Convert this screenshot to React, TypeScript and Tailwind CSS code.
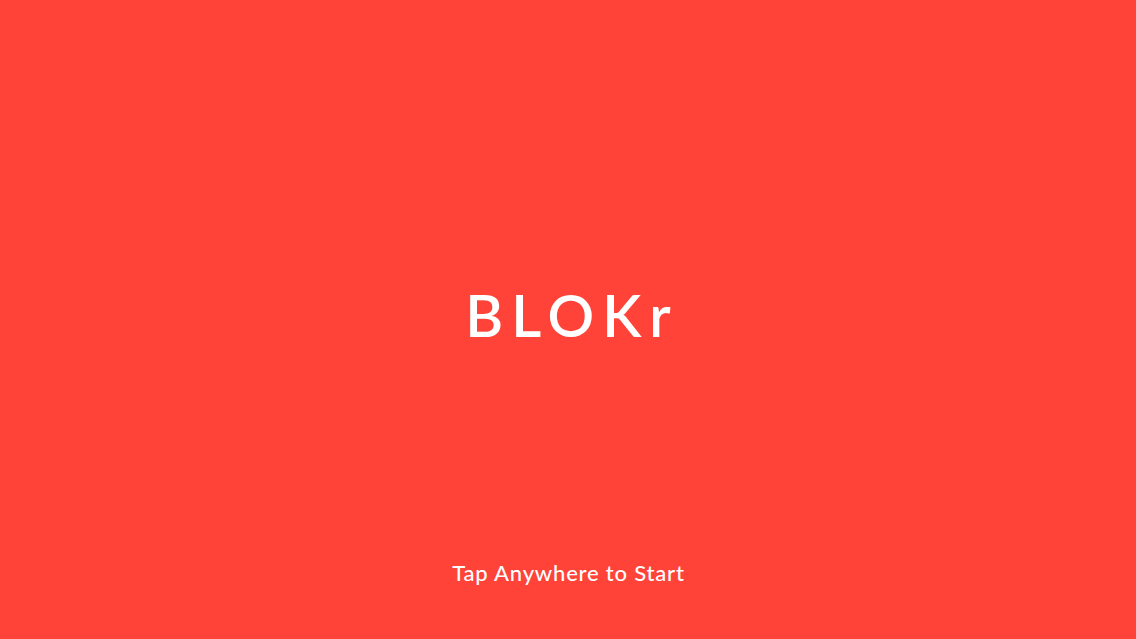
export default function App() {
  return (
    <div className="flex h-[639px] w-[1136px] flex-col items-center bg-[#ff4338] font-['Lato','Open_Sans',sans-serif] text-white">
      <div className="flex flex-1 items-center justify-center pt-[68px]">
        <h1 className="mr-[-8px] text-[58px] font-semibold leading-none tracking-[8px]">BLOKr</h1>
      </div>
      <p className="mr-[-0.8px] pb-[55px] text-[22px] font-medium leading-none tracking-[0.8px]">Tap Anywhere to Start</p>
    </div>
  );
}
